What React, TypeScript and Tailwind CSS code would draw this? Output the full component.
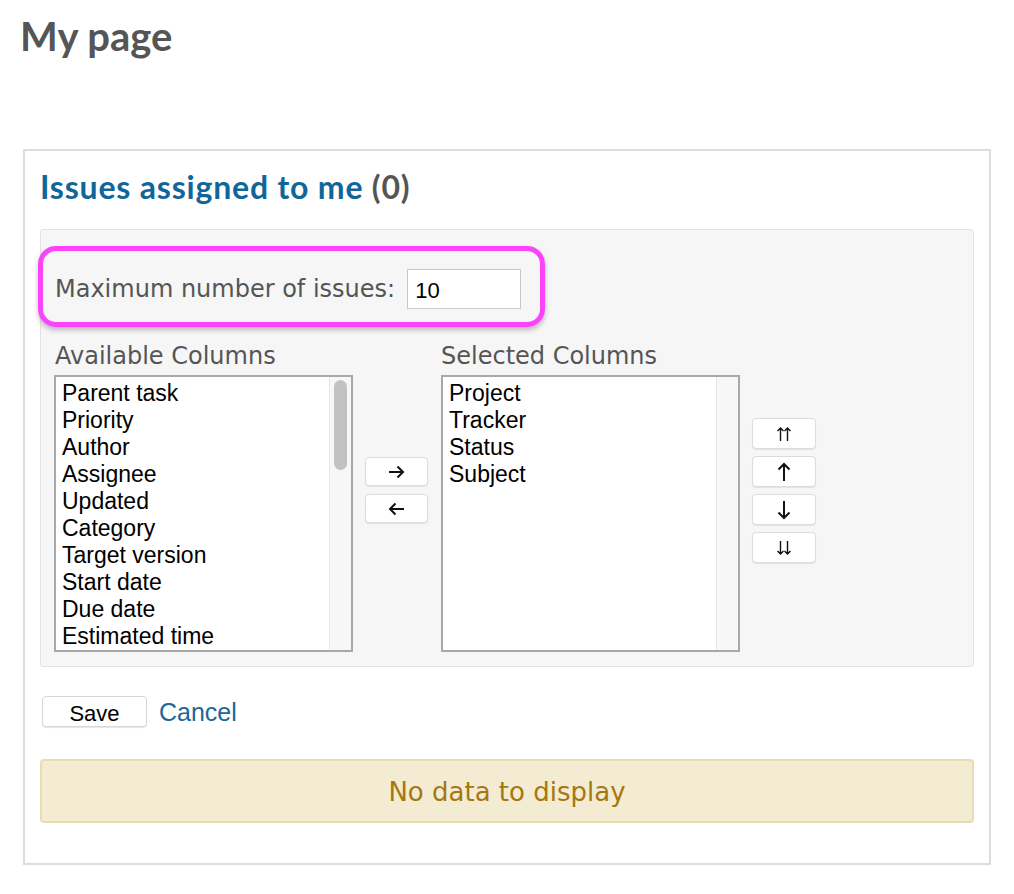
import React from "react";

const available = [
    "Parent task",
    "Priority",
    "Author",
    "Assignee",
    "Updated",
    "Category",
    "Target version",
    "Start date",
    "Due date",
    "Estimated time",
];

const selected = ["Project", "Tracker", "Status", "Subject"];

const verdana = { fontFamily: '"DejaVu Sans", Verdana, sans-serif' };

// small arrow drawings used on the move buttons
const Arrow = ({ dir }: { dir: "right" | "left" | "up" | "down" }) => {
    if (dir === "right" || dir === "left") {
        return (
            <svg width="17" height="14" viewBox="0 0 17 14" className={dir === "left" ? "rotate-180" : ""}>
                <path d="M1 7h14M9.5 1.5l5.5 5.5-5.5 5.5" fill="none" stroke="#111" strokeWidth="2" />
            </svg>
        );
    }
    return (
        <svg width="14" height="20" viewBox="0 0 14 20" className={dir === "down" ? "rotate-180" : ""}>
            <path d="M7 19V2M1.5 7.5l5.5-5.5 5.5 5.5" fill="none" stroke="#111" strokeWidth="2" />
        </svg>
    );
};

const DoubleArrow = ({ dir }: { dir: "up" | "down" }) => (
    <svg width="14" height="16" viewBox="0 0 14 16" className={dir === "down" ? "rotate-180" : ""}>
        <path d="M3.5 15V2M0.5 5l3-3 3 3M10.5 15V2M7.5 5l3-3 3 3" fill="none" stroke="#111" strokeWidth="1.4" />
    </svg>
);

const MoveButton = ({ children, tall }: { children: React.ReactNode; tall?: boolean }) => (
    <button
        className={`flex items-center justify-center bg-white border border-[#dcdcdc] rounded-[4px] shadow-[0_1px_1px_rgba(0,0,0,0.08)] ${
            tall ? "w-[64px] h-[31px]" : "w-[63px] h-[29px]"
        }`}
    >
        {children}
    </button>
);

const ListBox = ({ items, scroll }: { items: string[]; scroll?: boolean }) => (
    <div className="flex w-[299px] h-[277px] bg-white border-2 border-[#a8a8a8] overflow-hidden">
        <div
            className="flex-1 pt-[3px] pl-[6px] text-[23px] leading-[27px] text-black"
            style={{ fontFamily: '"Liberation Sans", Arial, sans-serif' }}
        >
            {items.map((item) => (
                <div key={item} className="whitespace-nowrap">
                    {item}
                </div>
            ))}
        </div>
        <div className="w-[22px] h-full bg-[#f7f7f7] border-l border-[#e6e6e6] flex justify-center pt-[3px]">
            {scroll && <div className="w-[13px] h-[90px] rounded-full bg-[#c2c2c2]" />}
        </div>
    </div>
);

export default function App() {
    return (
        <div className="min-h-screen bg-white pt-[12px] pl-[20px] pb-[28px]">
            {/* Title */}
            <h1
                className="text-[40px] leading-[48px] font-bold text-[#555]"
                style={{ fontFamily: '"Lato", "Trebuchet MS", sans-serif' }}
            >
                My page
            </h1>

            {/* Block */}
            <div className="mt-[89px] ml-[3px] w-[968px] border-2 border-[#dddddd] bg-white px-[15px] pt-[18px] pb-[40px]">
                <h2
                    className="text-[32px] leading-[36px] font-bold text-[#169] tracking-[0.8px]"
                    style={{ fontFamily: '"Lato", "Trebuchet MS", sans-serif' }}
                >
                    Issues assigned to me <span className="text-[#555]">(0)</span>
                </h2>

                {/* Settings box */}
                <div className="mt-[24px] bg-[#f6f6f6] border border-[#e2e2e2] rounded-[3px] pl-[14px] pt-[39px] pb-[14px]">
                    <div className="relative inline-flex items-center gap-[12px]">
                        <div className="absolute -top-[23px] -bottom-[18px] -left-[17px] -right-[24px] border-[5px] border-[#fb43fb] rounded-[18px] shadow-[0_3px_5px_rgba(0,0,0,0.25)] pointer-events-none" />
                        <label className="text-[24px] leading-[28px] text-[#555]" style={verdana}>
                            Maximum number of issues:
                        </label>
                        <div
                            className="w-[114px] h-[40px] bg-white border border-[#c8c8c8] flex items-center pl-[7px] pt-[2px] text-[22px] text-black"
                            style={{ fontFamily: '"Liberation Sans", Arial, sans-serif' }}
                        >
                            10
                        </div>
                    </div>

                    <div className="mt-[33px] flex items-start -ml-px">
                        <div>
                            <div className="text-[24px] leading-[28px] text-[#555] pl-px mb-[5px]" style={verdana}>
                                Available Columns
                            </div>
                            <ListBox items={available} scroll />
                        </div>

                        <div className="ml-[12px] pt-[115px] flex flex-col gap-[8px]">
                            <MoveButton>
                                <Arrow dir="right" />
                            </MoveButton>
                            <MoveButton>
                                <Arrow dir="left" />
                            </MoveButton>
                        </div>

                        <div className="ml-[13px]">
                            <div className="text-[24px] leading-[28px] text-[#555] mb-[5px]" style={verdana}>
                                Selected Columns
                            </div>
                            <ListBox items={selected} />
                        </div>

                        <div className="ml-[12px] pt-[76px] flex flex-col gap-[7px]">
                            <MoveButton tall>
                                <DoubleArrow dir="up" />
                            </MoveButton>
                            <MoveButton tall>
                                <Arrow dir="up" />
                            </MoveButton>
                            <MoveButton tall>
                                <Arrow dir="down" />
                            </MoveButton>
                            <MoveButton tall>
                                <DoubleArrow dir="down" />
                            </MoveButton>
                        </div>
                    </div>
                </div>

                {/* Actions */}
                <div className="mt-[29px] ml-[2px] flex items-center gap-[12px]">
                    <button
                        className="w-[105px] h-[31px] bg-white border border-[#d8d8d8] rounded-[4px] shadow-[0_1px_1px_rgba(0,0,0,0.1)] text-[22px] text-black"
                        style={{ fontFamily: '"Liberation Sans", Arial, sans-serif' }}
                    >
                        Save
                    </button>
                    <a
                        href="#"
                        className="text-[25px] leading-[30px] text-[#1d6699]"
                        style={{ fontFamily: '"Liberation Sans", Arial, sans-serif' }}
                    >
                        Cancel
                    </a>
                </div>

                {/* Empty state */}
                <div
                    className="mt-[32px] h-[64px] bg-[#f3ecd2] border-2 border-[#e8dcb4] rounded-[4px] flex items-center justify-center text-[26px] text-[#a7770f] pt-[3px]"
                    style={verdana}
                >
                    No data to display
                </div>
            </div>
        </div>
    );
}
